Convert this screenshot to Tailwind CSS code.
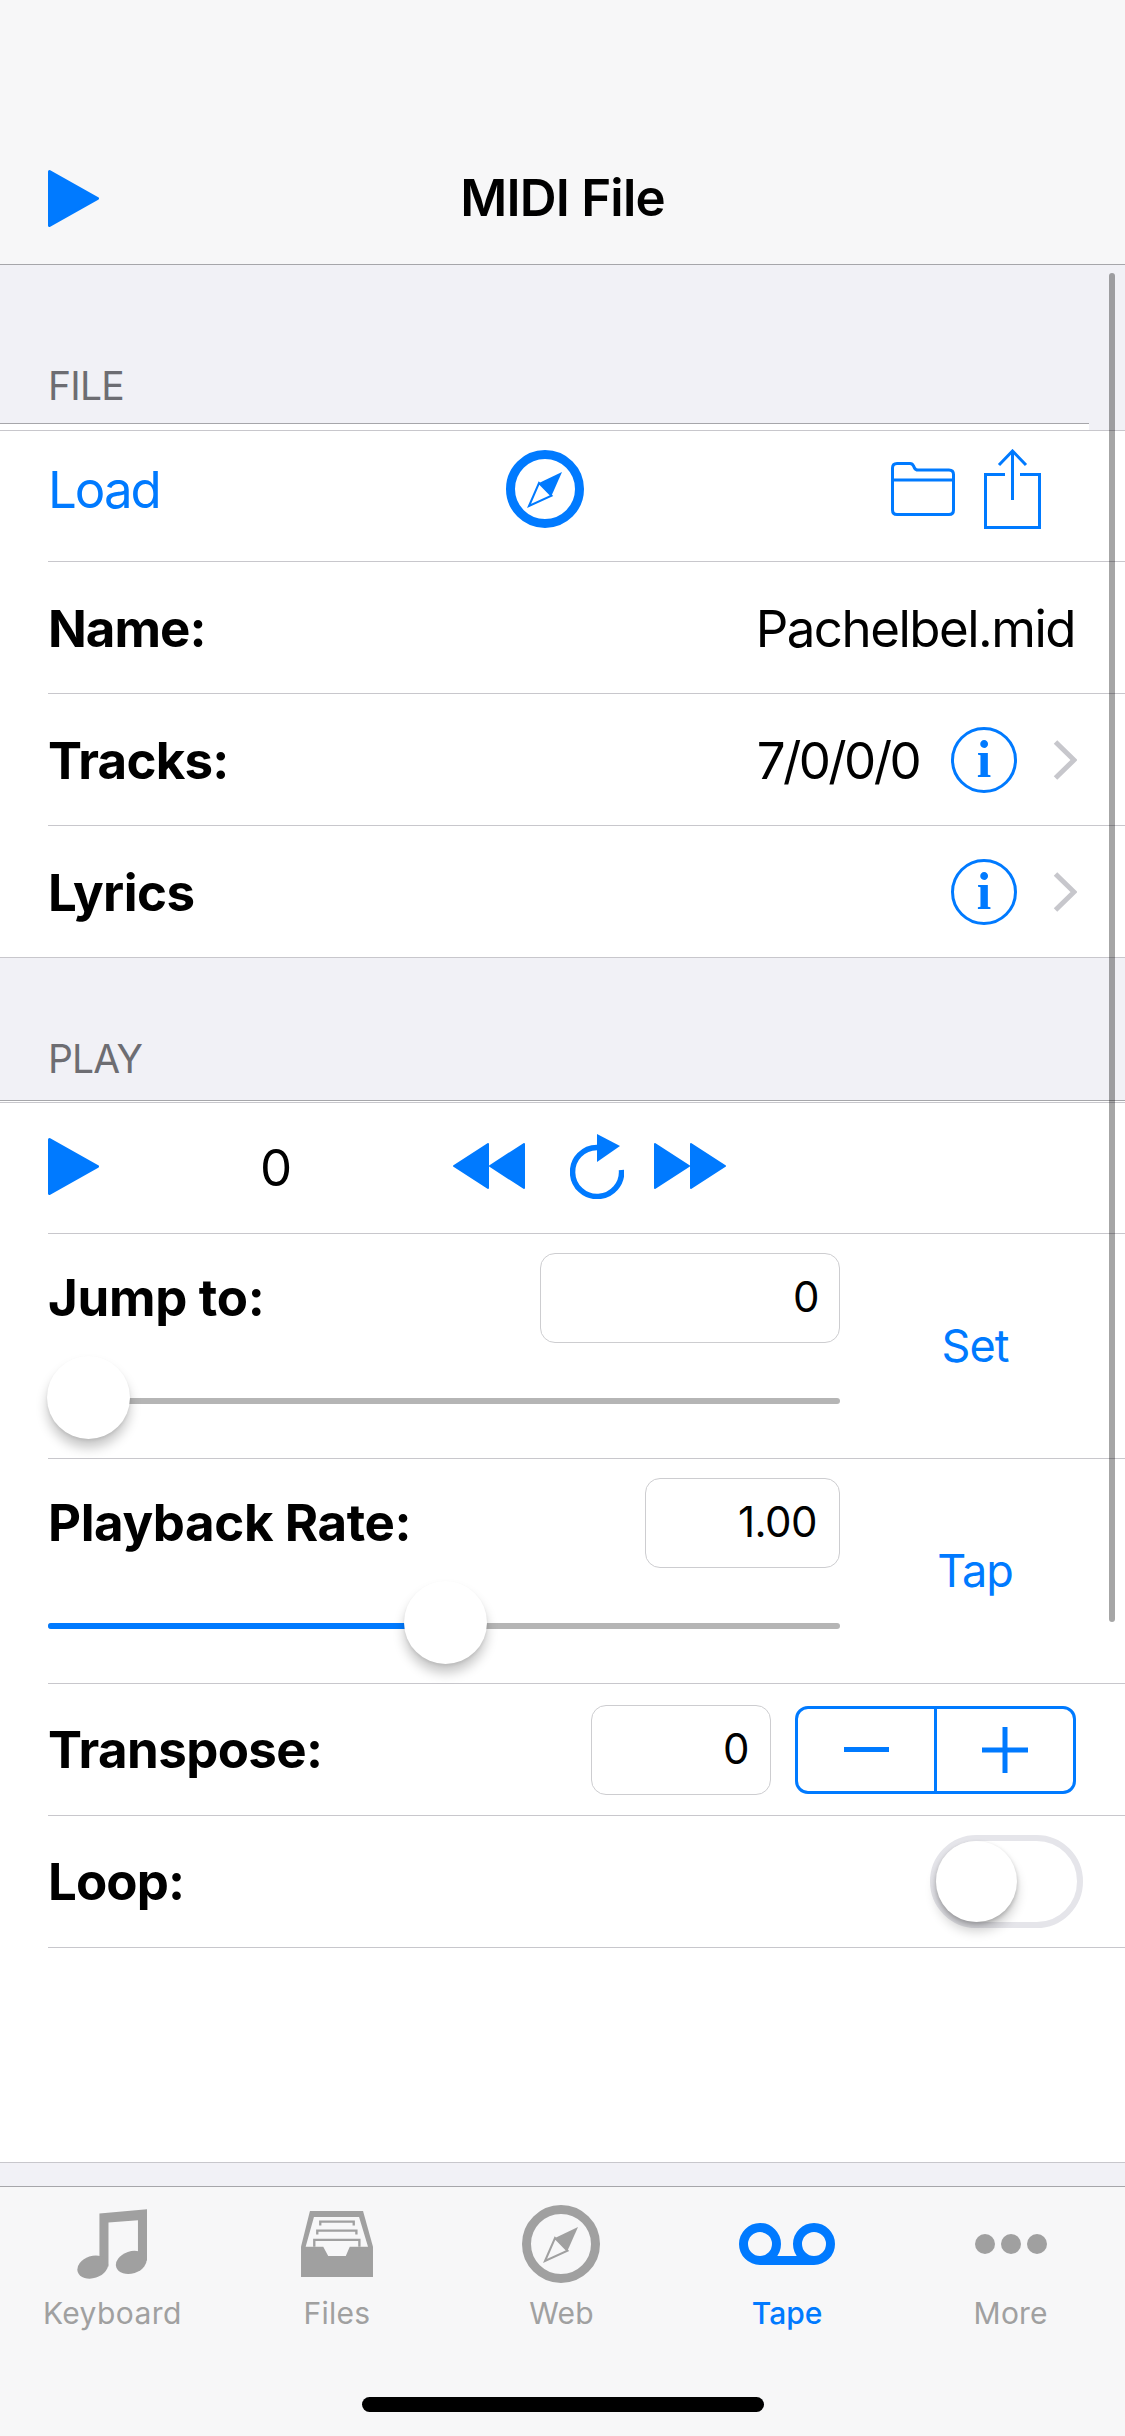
<!DOCTYPE html>
<html lang="en">
  <head>
    <meta charset="UTF-8" />
    <title>MIDI File</title>
    <script src="https://cdn.jsdelivr.net/npm/@tailwindcss/browser@4"></script>
  </head>
  <body class="relative flex h-[2436px] w-[1125px] flex-col overflow-hidden bg-white font-['Inter','Liberation_Sans',sans-serif] text-black">
    <!-- nav bar -->
    <header class="grid h-[265px] grid-cols-[1fr_auto_1fr] items-center border-b border-[#a6a6aa] bg-[#f7f7f8] px-12 pt-[132px]">
      <svg class="h-[57px] w-[51px] fill-[#007aff] stroke-[#007aff]" viewBox="0 0 51 57" stroke-width="3" stroke-linejoin="round"><path d="M1.5 1.5 L49.5 28.5 L1.5 55.5 Z" /></svg>
      <h1 class="text-[51px] leading-[60px] font-semibold tracking-[-0.8px]">MIDI File</h1>
      <div></div>
    </header>

    <!-- FILE -->
    <div class="bg-[#f1f1f6]">
      <div class="flex h-[159px] w-[1089px] items-end border-b border-[#a6a6aa] pb-[14px] pl-12">
        <span class="text-[39px] leading-[47px] tracking-[-0.8px] text-[#6d6d72]">FILE</span>
      </div>
      <div class="h-[6px] w-[1089px] bg-white"></div>
    </div>
    <section class="border-t border-b border-[#c8c7cc] pl-12">
      <div class="flex h-[131px] items-center border-b border-[#c8c7cc] pr-[84px] pb-[14px] text-[#007aff]">
        <span class="w-[458px] pt-[2px] text-[51px] tracking-[-2px]">Load</span>
        <svg class="h-[78px] w-[78px]" viewBox="0 0 78 78">
          <circle cx="39" cy="39" r="34.5" fill="none" stroke="#007aff" stroke-width="9" />
          <path d="M56 22 L33 33 L45.5 45.7 Z" fill="#007aff" />
          <path d="M23 56 L33 33 L45.5 45.7 Z" fill="none" stroke="#007aff" stroke-width="2" />
        </svg>
        <svg class="ml-auto h-[54px] w-[64px]" viewBox="0 0 64 54" fill="none" stroke="#007aff" stroke-width="3">
          <path d="M1.5 6 Q1.5 1.5 6 1.5 H19 Q21.5 1.5 22.5 4 L23.5 6 Q24.5 8 27 8 H58 Q62.5 8 62.5 12.5 V48 Q62.5 52.5 58 52.5 H6 Q1.5 52.5 1.5 48 Z" />
          <path d="M1.5 18 H62.5" />
        </svg>
        <svg class="ml-[29px] h-[80px] w-[57px]" viewBox="0 0 57 80" fill="none" stroke="#007aff" stroke-width="3">
          <path d="M21 25.5 H1.5 V78.5 H55.5 V25.5 H36" />
          <path d="M28.5 51 V2 M15 16 L28.5 2 L42 16" />
        </svg>
      </div>
      <div class="flex h-[132px] items-center justify-between border-b border-[#c8c7cc] pt-[3px] pr-[50px] text-[51px]">
        <span class="font-bold tracking-[-1px]">Name:</span>
        <span class="tracking-[-1.5px]">Pachelbel.mid</span>
      </div>
      <div class="flex h-[132px] items-center border-b border-[#c8c7cc] pr-12 text-[51px]">
        <span class="pt-[3px] font-bold tracking-[-0.8px]">Tracks:</span>
        <span class="mr-[-1px] ml-auto pt-[3px] tracking-[-2.6px]">7/0/0/0</span>
        <div class="ml-[33px] flex h-[66px] w-[66px] items-center justify-center rounded-full border-[3px] border-[#007aff] font-['Liberation_Serif',serif] text-[52px] leading-none font-bold text-[#007aff]">i</div>
        <svg class="ml-[36px] h-[40px] w-[24px]" viewBox="0 0 24 40" fill="none" stroke="#c7c7cc" stroke-width="5"><path d="M2.5 2 L21 20 L2.5 38" /></svg>
      </div>
      <div class="flex h-[131px] items-center pr-12 text-[51px]">
        <span class="pt-[3px] font-bold tracking-[-0.5px]">Lyrics</span>
        <div class="ml-auto flex h-[66px] w-[66px] items-center justify-center rounded-full border-[3px] border-[#007aff] font-['Liberation_Serif',serif] text-[52px] leading-none font-bold text-[#007aff]">i</div>
        <svg class="ml-[36px] h-[40px] w-[24px]" viewBox="0 0 24 40" fill="none" stroke="#c7c7cc" stroke-width="5"><path d="M2.5 2 L21 20 L2.5 38" /></svg>
      </div>
    </section>

    <!-- PLAY -->
    <div class="flex h-[143px] items-end border-b border-[#a6a6aa] bg-[#f1f1f6] pb-[18px] pl-12">
      <span class="text-[39px] leading-[47px] tracking-[-0.8px] text-[#6d6d72]">PLAY</span>
    </div>
    <section class="mt-px flex-1 border-t border-[#c8c7cc] pl-12">
      <div class="flex h-[131px] items-center border-b border-[#c8c7cc]">
        <svg class="mt-[-3px] h-[57px] w-[51px] fill-[#007aff] stroke-[#007aff]" viewBox="0 0 51 57" stroke-width="3" stroke-linejoin="round"><path d="M1.5 1.5 L49.5 28.5 L1.5 55.5 Z" /></svg>
        <span class="w-[354px] text-center text-[51px]">0</span>
        <svg class="mt-[-5px] h-[46px] w-[72px] fill-[#007aff] stroke-[#007aff]" viewBox="0 0 72 46" stroke-width="2" stroke-linejoin="round"><path d="M1 23 L35 1 V45 Z M37 23 L71 1 V45 Z" /></svg>
        <svg class="mt-[-4px] ml-[45px] h-[65px] w-[54px]" viewBox="0 0 54 65">
          <path d="M27 13.5 A24.5 24.5 0 1 0 51.5 36" fill="none" stroke="#007aff" stroke-width="5.5" />
          <path d="M27 0 L50 12 L27 28 Z" fill="#007aff" />
        </svg>
        <svg class="mt-[-5px] ml-[30px] h-[46px] w-[72px] fill-[#007aff] stroke-[#007aff]" viewBox="0 0 72 46" stroke-width="2" stroke-linejoin="round"><path d="M1 1 L35 23 L1 45 Z M37 1 L71 23 L37 45 Z" /></svg>
      </div>

      <div class="flex h-[225px] border-b border-[#c8c7cc]">
        <div class="w-[792px] pt-[19px]">
          <div class="flex items-center justify-between">
            <span class="text-[51px] font-bold tracking-[-0.3px]">Jump to:</span>
            <div class="flex h-[90px] w-[300px] items-center justify-end rounded-[15px] border border-[#cdcdd0] pr-[20px] pb-[3px] text-[42px] tracking-[-0.5px]">0</div>
          </div>
          <div class="relative mt-[55px] h-[6px] rounded-full bg-[#b5b5b5]">
            <div class="absolute top-[-42px] left-[-1px] h-[83px] w-[83px] rounded-full bg-white shadow-[0_9px_12px_rgba(0,0,0,0.22),0_2px_3px_rgba(0,0,0,0.08)]"></div>
          </div>
        </div>
        <div class="flex w-[270px] items-center justify-center text-[45px] tracking-[-1px] text-[#007aff]">Set</div>
      </div>

      <div class="flex h-[225px] border-b border-[#c8c7cc]">
        <div class="w-[792px] pt-[19px]">
          <div class="flex items-center justify-between">
            <span class="text-[51px] font-bold tracking-[-0.4px]">Playback Rate:</span>
            <div class="flex h-[90px] w-[195px] items-center justify-end rounded-[15px] border border-[#cdcdd0] pr-[22px] pb-[3px] text-[42px] tracking-[-0.5px]">1.00</div>
          </div>
          <div class="relative mt-[55px] h-[6px] rounded-full bg-[#b5b5b5]">
            <div class="h-[6px] w-[370px] rounded-full bg-[#007aff]"></div>
            <div class="absolute top-[-42px] left-[356px] h-[83px] w-[83px] rounded-full bg-white shadow-[0_9px_12px_rgba(0,0,0,0.22),0_2px_3px_rgba(0,0,0,0.08)]"></div>
          </div>
        </div>
        <div class="flex w-[270px] items-center justify-center text-[45px] tracking-[-1px] text-[#007aff]">Tap</div>
      </div>

      <div class="flex h-[132px] items-center border-b border-[#c8c7cc] pr-[49px]">
        <span class="pt-[2px] text-[51px] font-bold tracking-[-0.6px]">Transpose:</span>
        <div class="ml-auto flex h-[90px] w-[180px] items-center justify-end rounded-[15px] border border-[#cdcdd0] pr-[21px] pb-[3px] text-[42px] tracking-[-0.5px]">0</div>
        <div class="ml-[24px] flex h-[88px] w-[281px] rounded-[13px] border-[3px] border-[#007aff]">
          <div class="flex w-[139px] items-center justify-center border-r-[3px] border-[#007aff]">
            <div class="h-[5px] w-[45px] bg-[#007aff]"></div>
          </div>
          <div class="flex flex-1 items-center justify-center">
            <svg class="h-[46px] w-[46px] fill-[#007aff]" viewBox="0 0 46 46"><path d="M20.5 0 H25.5 V20.5 H46 V25.5 H25.5 V46 H20.5 V25.5 H0 V20.5 H20.5 Z" /></svg>
          </div>
        </div>
      </div>

      <div class="flex h-[132px] items-center border-b border-[#c8c7cc] pr-[42px]">
        <span class="pt-[2px] text-[51px] font-bold tracking-[-0.9px]">Loop:</span>
        <div class="ml-auto h-[93px] w-[153px] rounded-full border-[6px] border-[#e5e5ea] bg-white">
          <div class="h-[81px] w-[81px] rounded-full bg-white shadow-[0_9px_12px_rgba(0,0,0,0.2),0_2px_4px_rgba(0,0,0,0.2)]"></div>
        </div>
      </div>
    </section>

    <div class="h-[24px] border-t border-[#c8c7cc] bg-[#f1f1f6]"></div>

    <!-- tab bar -->
    <nav class="flex h-[250px] flex-col border-t border-[#a6a6aa] bg-[#f7f7f8]">
      <div class="grid grid-cols-5 pt-[18px] pr-[2px] text-[30px] leading-[36px] text-[#a0a0a0]">
        <div class="flex flex-col items-center">
          <div class="flex h-[78px] items-center">
            <svg class="h-[70px] w-[70px] fill-[#a0a0a0]" viewBox="113 57 209 208">
              <path d="M180 70 L322 57 V210 H295 V90 L207 97 V228 H180 Z" />
              <ellipse cx="160" cy="230" rx="47" ry="33" transform="rotate(-18 160 230)" />
              <ellipse cx="275" cy="216" rx="47" ry="33" transform="rotate(-18 275 216)" />
            </svg>
          </div>
          <span class="mt-[12px] tracking-[0.4px]">Keyboard</span>
        </div>
        <div class="flex flex-col items-center">
          <div class="flex h-[78px] items-center">
            <svg class="h-[66px] w-[72px]" viewBox="783 62 217 199">
              <path d="M810 62 H970 L1000 170 V261 H783 V170 Z" fill="#a0a0a0" />
              <path d="M822 80 H958 L985 170 H930 L918 198 H865 L850 170 H797 Z" fill="#f7f7f8" />
              <path d="M841 106 V94 H942 V106 M832 133 V121 H950 V133 M823 170 V149 H959 V170" fill="none" stroke="#a0a0a0" stroke-width="7" />
            </svg>
          </div>
          <span class="mt-[12px] tracking-[0.2px]">Files</span>
        </div>
        <div class="flex flex-col items-center">
          <svg class="h-[78px] w-[78px]" viewBox="0 0 78 78">
            <circle cx="39" cy="39" r="34.5" fill="none" stroke="#a0a0a0" stroke-width="9" />
            <path d="M56 22 L33 33 L45.5 45.7 Z" fill="#a0a0a0" />
            <path d="M23 56 L33 33 L45.5 45.7 Z" fill="none" stroke="#a0a0a0" stroke-width="2" />
          </svg>
          <span class="mt-[12px] tracking-[0.2px]">Web</span>
        </div>
        <div class="ml-[2px] flex flex-col items-center text-[#007aff]">
          <div class="flex h-[78px] items-center">
            <svg class="h-[42px] w-[96px]" viewBox="0 0 96 42">
              <circle cx="21" cy="21" r="16.5" fill="none" stroke="#007aff" stroke-width="9" />
              <circle cx="75" cy="21" r="16.5" fill="none" stroke="#007aff" stroke-width="9" />
              <rect x="21" y="33" width="54" height="9" fill="#007aff" />
            </svg>
          </div>
          <span class="mt-[12px] font-medium">Tape</span>
        </div>
        <div class="flex flex-col items-center">
          <div class="flex h-[78px] items-center gap-[6px]">
            <div class="h-[20px] w-[20px] rounded-full bg-[#a0a0a0]"></div>
            <div class="h-[20px] w-[20px] rounded-full bg-[#a0a0a0]"></div>
            <div class="h-[20px] w-[20px] rounded-full bg-[#a0a0a0]"></div>
          </div>
          <span class="mt-[12px] tracking-[0.2px]">More</span>
        </div>
      </div>
      <div class="mt-auto mb-[24px] h-[15px] w-[402px] self-center rounded-full bg-black"></div>
    </nav>

    <!-- scroll indicator -->
    <div class="absolute top-[273px] left-[1109px] h-[1349px] w-[6px] rounded-full bg-black/35"></div>
  </body>
</html>
